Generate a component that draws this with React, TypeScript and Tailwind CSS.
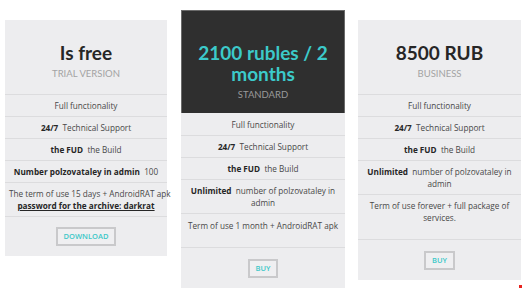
import React from "react"

const body = { fontFamily: '"Open Sans", "Liberation Sans", sans-serif' }
const head = { fontFamily: 'Lato, "Open Sans", sans-serif' }

const Row = ({ children, className = "" }: { children: React.ReactNode; className?: string }) => (
  <li className={`border-t border-[#dcdcde] px-1 pt-[5px] pb-[4px] text-center text-[8.2px] leading-[12px] text-[#484848] ${className}`}>
    {children}
  </li>
)

const B = ({ children }: { children: React.ReactNode }) => (
  <b className="font-bold text-[#262626]">{children}&nbsp;&nbsp;</b>
)

const Btn = ({ label }: { label: string }) => (
  <button className="border-2 border-[#c9c9cb] bg-[#efeff1] px-[6px] py-[2px] text-[7.5px] font-semibold leading-[11px] text-[#3cc8c8]">
    {label}
  </button>
)

export default function App() {
  return (
    <div className="relative h-[288px] w-[524px] overflow-hidden bg-white" style={body}>
      <div className="flex items-start pl-[5px]">
        {/* trial */}
        <div className="mt-[20px] w-[162px] bg-[#ededef]">
          <div className="pt-[22px] pb-[15px] text-center">
            <div className="text-[19px] font-bold leading-[21px] text-[#262626]" style={head}>Is free</div>
            <div className="mt-[6px] text-[9.5px] leading-[10px] text-[#a3a3a3]" style={head}>TRIAL VERSION</div>
          </div>
          <ul>
            <Row>Full functionality</Row>
            <Row><B>24/7</B>Technical Support</Row>
            <Row><B>the FUD</B>the Build</Row>
            <Row><B>Number polzovataley in admin</B>100</Row>
            <Row className="!pt-[5px] !pb-[4px]">
              <span className="whitespace-nowrap">The term of use 15 days + AndroidRAT apk</span>
              <br />
              <b className="font-bold text-[#262626] underline">password for the archive: darkrat</b>
            </Row>
            <li className="flex justify-center border-t border-[#dcdcde] pt-[10px] pb-[10px]">
              <Btn label="DOWNLOAD" />
            </li>
          </ul>
        </div>

        {/* standard */}
        <div className="ml-[14px] mt-[10px] w-[164px] bg-[#ededef]">
          <div className="border border-b-0 border-[#6a6a6a] bg-[#2f2f2f] pt-[31px] pb-[13px] text-center">
            <div className="text-[19px] font-bold leading-[21px] text-[#3ccaca]" style={head}>
              2100 rubles / 2<br />months
            </div>
            <div className="mt-[6px] text-[9.5px] leading-[10px] text-[#9a9a9a]" style={head}>STANDARD</div>
          </div>
          <ul>
            <li className="px-1 pt-[6px] pb-[4px] text-center text-[8.2px] leading-[12px] text-[#484848]">Full functionality</li>
            <Row><B>24/7</B>Technical Support</Row>
            <Row><B>the FUD</B>the Build</Row>
            <Row><B>Unlimited</B>number of polzovataley in<br />admin</Row>
            <Row className="!pt-[6px] !pb-[15px]">Term of use 1 month + AndroidRAT apk</Row>
            <li className="flex justify-center border-t border-[#dcdcde] pt-[11px] pb-[10px]">
              <Btn label="BUY" />
            </li>
          </ul>
        </div>

        {/* business */}
        <div className="ml-[13px] mt-[20px] w-[163px] bg-[#ededef]">
          <div className="pt-[22px] pb-[15px] text-center">
            <div className="text-[19px] font-bold leading-[21px] text-[#262626]" style={head}>8500 RUB</div>
            <div className="mt-[6px] text-[9.5px] leading-[10px] text-[#a3a3a3]" style={head}>BUSINESS</div>
          </div>
          <ul>
            <Row>Full functionality</Row>
            <Row><B>24/7</B>Technical Support</Row>
            <Row><B>the FUD</B>the Build</Row>
            <Row><B>Unlimited</B>number of polzovataley in<br />admin</Row>
            <Row className="!pt-[5px] !pb-[15px]">Term of use forever + full package of<br />services.</Row>
            <li className="flex justify-center border-t border-[#dcdcde] pt-[11px] pb-[10px]">
              <Btn label="BUY" />
            </li>
          </ul>
        </div>
      </div>
      <div className="absolute right-[2px] bottom-0 h-[3px] w-[3px] bg-[#e8231e]" />
    </div>
  )
}
